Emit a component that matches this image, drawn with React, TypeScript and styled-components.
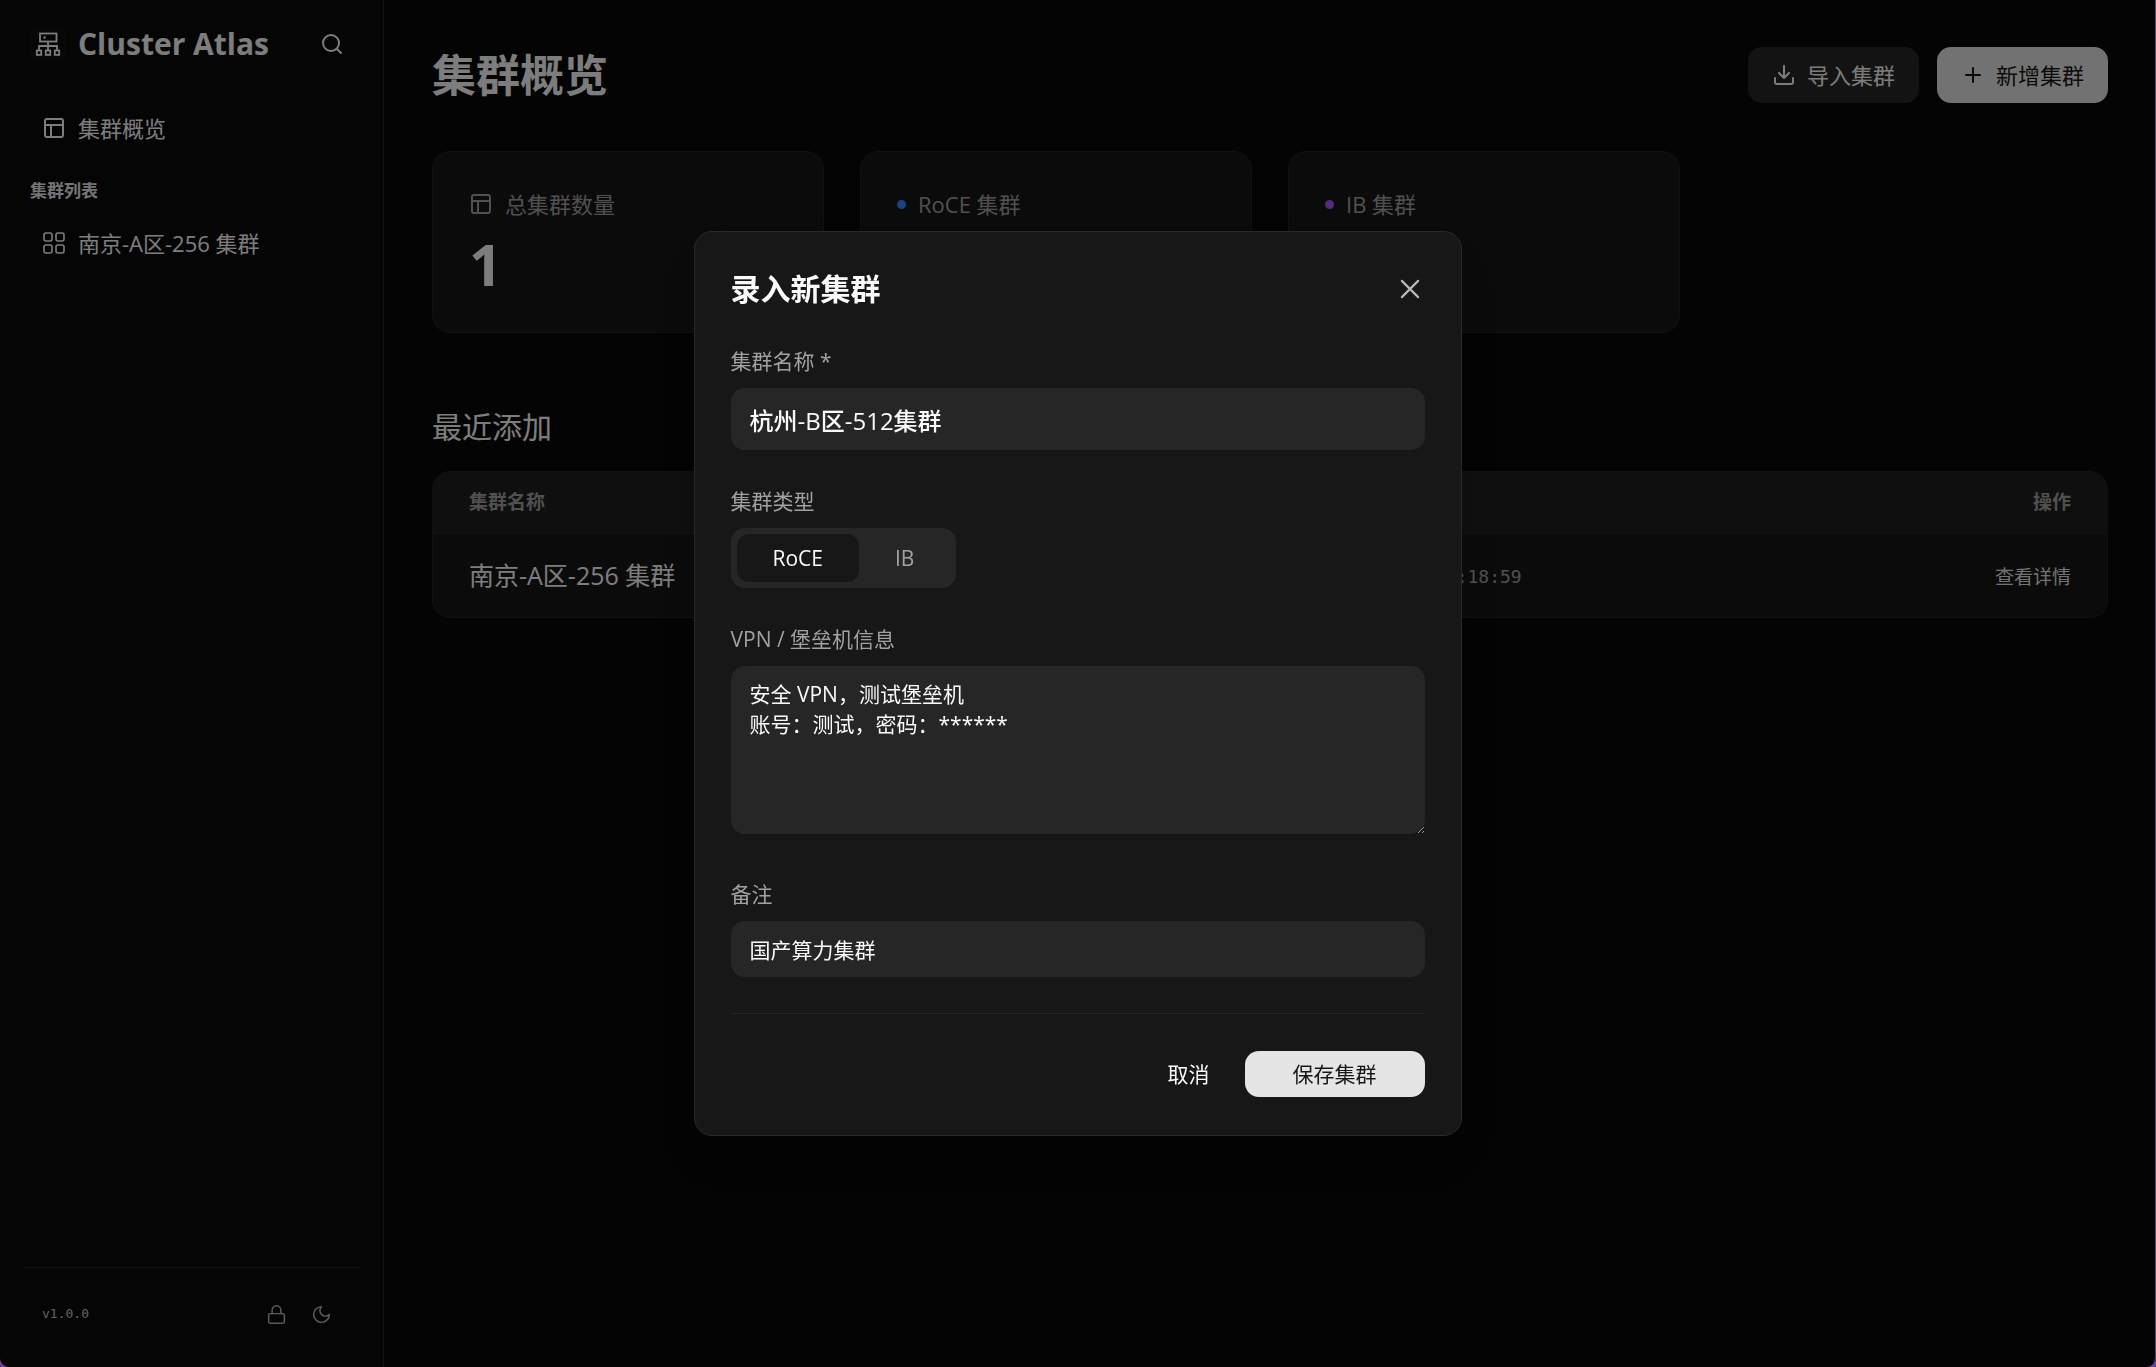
import React, { useState } from "react";
import styled, { createGlobalStyle } from "styled-components";

const sans = `"Open Sans", "Noto Sans CJK SC", sans-serif`;
const mono = `"DejaVu Sans Mono", "Liberation Mono", monospace`;

const GlobalStyle = createGlobalStyle`
  * { box-sizing: border-box; }
  body {
    margin: 0;
    background: #0a0a0a;
    color: #fafafa;
    font-family: ${sans};
    font-size: 21px;
    line-height: 30px;
  }
  h1, h2, p { margin: 0; }
  button, input, textarea { font: inherit; color: inherit; }
  button { border: 0; background: none; padding: 0; cursor: pointer; }
`;

const Shell = styled.div`
  display: flex;
  min-height: 100vh;
`;

const Sidebar = styled.aside`
  display: flex;
  flex-direction: column;
  flex: 0 0 384px;
  padding: 26px 24px 24px;
  border-right: 1px solid #262626;
`;

const Brand = styled.div`
  display: flex;
  align-items: center;
  gap: 12px;
  height: 36px;
  padding: 0 6px;
`;

const Logo = styled.span`
  display: grid;
  place-items: center;
  width: 36px;
  height: 36px;
  border-radius: 8px;
  background: #0f0f0f;
`;

const BrandName = styled.span`
  flex: 1;
  font-size: 30px;
  font-weight: 700;
  white-space: nowrap;
`;

const IconButton = styled.button<{ $size: number; $muted?: boolean }>`
  display: grid;
  place-items: center;
  width: ${(p) => p.$size}px;
  height: ${(p) => p.$size}px;
  color: ${(p) => (p.$muted ? "#b8b8b8" : "#fafafa")};
`;

const Search = styled.div`
  padding-right: 9px;
`;

const Nav = styled.nav`
  display: flex;
  flex-direction: column;
  margin-top: 42px;
`;

const NavLink = styled.a`
  display: flex;
  align-items: center;
  gap: 12px;
  height: 48px;
  padding: 0 18px;
  color: #fafafa;
  font-size: 22px;
  text-decoration: none;
`;

const NavHeading = styled.p`
  margin: 24px 6px 13px;
  font-size: 17px;
  font-weight: 700;
  color: #ebebeb;
`;

const SideFooter = styled.footer`
  display: flex;
  align-items: center;
  gap: 24px;
  margin-top: auto;
  padding: 31px 27px 14px 18px;
  border-top: 1px solid #262626;
  color: #c4c4c4;
`;

const Version = styled.span`
  flex: 1;
  font-family: ${mono};
  font-size: 13px;
`;

const Main = styled.main`
  flex: 1;
  min-width: 0;
  padding: 42px 48px;
  background: #080808;
`;

const PageHeader = styled.header`
  display: flex;
  align-items: center;
  justify-content: space-between;
  margin-bottom: 43px;
`;

const PageTitle = styled.h1`
  font-size: 44px;
  line-height: 66px;
  font-weight: 700;
`;

const Actions = styled.div`
  display: flex;
  gap: 18px;
`;

const ActionButton = styled.button<{ $primary?: boolean }>`
  display: flex;
  align-items: center;
  gap: 11px;
  height: 56px;
  padding: 0 24px;
  border-radius: 14px;
  font-size: 22px;
  background: ${(p) => (p.$primary ? "#e5e5e5" : "#262626")};
  color: ${(p) => (p.$primary ? "#171717" : "#fafafa")};
`;

const Stats = styled.section`
  display: grid;
  grid-template-columns: repeat(3, 1fr);
  gap: 36px;
  max-width: 1248px;
`;

const StatCard = styled.div`
  padding: 36px;
  border: 1px solid #222222;
  border-radius: 18px;
  background: #161616;
`;

const StatLabel = styled.p`
  display: flex;
  align-items: center;
  gap: 12px;
  height: 32px;
  font-size: 22px;
  color: #a1a1a1;
`;

const Dot = styled.span<{ $color: string }>`
  width: 9px;
  height: 9px;
  border-radius: 50%;
  background: ${(p) => p.$color};
`;

const StatValue = styled.p`
  margin-top: 12px;
  font-size: 58px;
  line-height: 64px;
  font-weight: 700;
`;

const SectionTitle = styled.h2`
  margin: 72px 0 22px;
  font-size: 30px;
  line-height: 44px;
  font-weight: 400;
`;

const TableCard = styled.div`
  overflow: hidden;
  border: 1px solid #222222;
  border-radius: 18px;
  background: #161616;
`;

const Table = styled.table`
  width: 100%;
  border-collapse: collapse;
  table-layout: fixed;
`;

const Th = styled.th<{ $end?: boolean; $width?: string }>`
  width: ${(p) => p.$width ?? "auto"};
  height: 61px;
  padding: 0 36px;
  border-bottom: 1px solid #242424;
  background: #1f1f1f;
  color: #a1a1a1;
  font-size: 19px;
  font-weight: 700;
  text-align: ${(p) => (p.$end ? "right" : "left")};
`;

const Td = styled.td<{ $end?: boolean }>`
  height: 84px;
  padding: 0 36px;
  font-size: 25px;
  white-space: nowrap;
  text-align: ${(p) => (p.$end ? "right" : "left")};
`;

const Time = styled.time`
  font-family: ${mono};
  font-size: 18px;
  color: #a1a1a1;
`;

const DetailLink = styled.a`
  color: #e5e5e5;
  font-size: 19px;
  text-decoration: none;
`;

const Overlay = styled.div`
  position: fixed;
  inset: 0;
  display: flex;
  align-items: center;
  justify-content: center;
  background: rgba(0, 0, 0, 0.5);
  border-right: 1px solid #5f4280;
  border-radius: 0 0 9px 9px;
  box-shadow: 0 0 0 3px #6d45a0;
`;

const Dialog = styled.form`
  display: flex;
  flex-direction: column;
  gap: 36px;
  width: 768px;
  max-width: calc(100vw - 48px);
  padding: 36px 36px 38px;
  border: 1px solid #292929;
  border-radius: 18px;
  background: #171717;
  box-shadow: 0 25px 50px -12px rgba(0, 0, 0, 0.25);
`;

const DialogHeader = styled.div`
  display: flex;
  align-items: center;
  justify-content: space-between;
`;

const DialogTitle = styled.h2`
  font-size: 30px;
  line-height: 42px;
  font-weight: 700;
`;

const Field = styled.div`
  display: flex;
  flex-direction: column;
  align-items: stretch;
  gap: 12px;
`;

const Label = styled.label`
  color: #a1a1a1;
`;

const TextInput = styled.input<{ $large?: boolean }>`
  width: 100%;
  height: ${(p) => (p.$large ? 62 : 56)}px;
  padding: 0 19px;
  border: 0;
  border-radius: 14px;
  outline: 0;
  background: #262626;
  font-size: ${(p) => (p.$large ? 24 : 21)}px;
  font-weight: ${(p) => (p.$large ? 500 : 400)};
`;

const TextArea = styled.textarea`
  display: block;
  width: 100%;
  height: 168px;
  margin-bottom: 9px;
  padding: 13px 19px;
  border: 0;
  border-radius: 14px;
  outline: 0;
  background: #262626;
  resize: vertical;
`;

const Segmented = styled.div`
  display: flex;
  align-self: flex-start;
  padding: 6px;
  border-radius: 14px;
  background: #262626;
`;

const Segment = styled.button<{ $active: boolean }>`
  height: 48px;
  padding: 0 36px;
  border-radius: 12px;
  font-weight: 500;
  background: ${(p) => (p.$active ? "#171717" : "transparent")};
  color: ${(p) => (p.$active ? "#fafafa" : "#a1a1a1")};
`;

const DialogFooter = styled.div`
  display: flex;
  align-items: center;
  justify-content: flex-end;
  gap: 35px;
  padding-top: 37px;
  border-top: 1px solid #262626;
`;

const SaveButton = styled.button`
  height: 46px;
  padding: 0 48px;
  border-radius: 14px;
  background: #e5e5e5;
  color: #171717;
`;

type IconProps = { size?: number; stroke?: number; children?: React.ReactNode };

const Icon = ({ size = 24, stroke = 2, children }: IconProps) => (
  <svg
    width={size}
    height={size}
    viewBox="0 0 24 24"
    fill="none"
    stroke="currentColor"
    strokeWidth={stroke}
    strokeLinecap="round"
    strokeLinejoin="round"
    aria-hidden="true"
  >
    {children}
  </svg>
);

const LogoIcon = () => (
  <svg width={26} height={26} viewBox="0 0 26 26" fill="none" stroke="currentColor" strokeWidth="1.8" aria-hidden="true">
    <rect x="5" y="2.5" width="16.5" height="8" />
    <circle cx="9.6" cy="6.5" r="1.2" fill="currentColor" stroke="none" />
    <path d="M13 10.500v9M4 19.500v-4.500h18v4.500" />
    <rect x="1.800" y="19.500" width="4.400" height="4.400" />
    <rect x="10.800" y="19.500" width="4.400" height="4.400" />
    <rect x="19.800" y="19.500" width="4.400" height="4.400" />
  </svg>
);

const LayoutIcon = () => (
  <Icon>
    <rect x="3" y="3" width="18" height="18" rx="2" />
    <path d="M3 9h18M9 21V9" />
  </Icon>
);

const GridIcon = () => (
  <Icon stroke={1.6}>
    <rect x="2" y="2" width="8" height="8" rx="2" />
    <rect x="14" y="2" width="8" height="8" rx="2" />
    <rect x="2" y="14" width="8" height="8" rx="2" />
    <rect x="14" y="14" width="8" height="8" rx="2" />
  </Icon>
);

export default function App() {
  const [name, setName] = useState("杭州-B区-512集群");
  const [kind, setKind] = useState("RoCE");
  const [access, setAccess] = useState("安全 VPN，测试堡垒机\n账号：测试，密码：******");
  const [note, setNote] = useState("国产算力集群");

  return (
    <>
      <GlobalStyle />
      <Shell>
        <Sidebar>
          <Brand>
            <Logo>
              <LogoIcon />
            </Logo>
            <BrandName>Cluster Atlas</BrandName>
            <Search>
              <IconButton $size={24} aria-label="搜索">
                <Icon>
                  <circle cx="11" cy="11" r="8" />
                  <path d="m21 21-4.300-4.300" />
                </Icon>
              </IconButton>
            </Search>
          </Brand>
          <Nav>
            <NavLink href="#overview">
              <LayoutIcon />
              集群概览
            </NavLink>
            <NavHeading>集群列表</NavHeading>
            <NavLink href="#nanjing">
              <GridIcon />
              南京-A区-256 集群
            </NavLink>
          </Nav>
          <SideFooter>
            <Version>v1.0.0</Version>
            <IconButton $size={21} $muted aria-label="锁定">
              <Icon size={21} stroke={1.7}>
                <rect x="3" y="11" width="18" height="11" rx="2" />
                <path d="M7 11V7a5 5 0 0 1 10 0v4" />
              </Icon>
            </IconButton>
            <IconButton $size={21} $muted aria-label="深色模式">
              <Icon size={21} stroke={1.7}>
                <path d="M12 3a6 6 0 0 0 9 9 9 9 0 1 1-9-9Z" />
              </Icon>
            </IconButton>
          </SideFooter>
        </Sidebar>

        <Main>
          <PageHeader>
            <PageTitle>集群概览</PageTitle>
            <Actions>
              <ActionButton>
                <Icon>
                  <path d="M12 3v12M7 10l5 5 5-5M3 15v4a2 2 0 0 0 2 2h14a2 2 0 0 0 2-2v-4" />
                </Icon>
                导入集群
              </ActionButton>
              <ActionButton $primary>
                <Icon>
                  <path d="M12 5v14M5 12h14" />
                </Icon>
                新增集群
              </ActionButton>
            </Actions>
          </PageHeader>

          <Stats>
            <StatCard>
              <StatLabel>
                <LayoutIcon />
                总集群数量
              </StatLabel>
              <StatValue>1</StatValue>
            </StatCard>
            <StatCard>
              <StatLabel>
                <Dot $color="#3b82f6" />
                RoCE 集群
              </StatLabel>
            </StatCard>
            <StatCard>
              <StatLabel>
                <Dot $color="#a855f7" />
                IB 集群
              </StatLabel>
            </StatCard>
          </Stats>

          <SectionTitle>最近添加</SectionTitle>
          <TableCard>
            <Table>
              <thead>
                <tr>
                  <Th $width="512px">集群名称</Th>
                  <Th $width="20%">类型</Th>
                  <Th $width="30%">添加时间</Th>
                  <Th $end>操作</Th>
                </tr>
              </thead>
              <tbody>
                <tr>
                  <Td>南京-A区-256 集群</Td>
                  <Td>RoCE</Td>
                  <Td>
                    <Time>2025/12/15 10:18:59</Time>
                  </Td>
                  <Td $end>
                    <DetailLink href="#nanjing">查看详情</DetailLink>
                  </Td>
                </tr>
              </tbody>
            </Table>
          </TableCard>
        </Main>
      </Shell>

      <Overlay>
        <Dialog role="dialog" aria-modal="true" aria-labelledby="dialog-title" onSubmit={(e) => e.preventDefault()}>
          <DialogHeader>
            <DialogTitle id="dialog-title">录入新集群</DialogTitle>
            <IconButton type="button" $size={30} $muted aria-label="关闭">
              <Icon size={30} stroke={1.7}>
                <path d="M18.500 5.500l-13 13M5.500 5.500l13 13" />
              </Icon>
            </IconButton>
          </DialogHeader>
          <Field>
            <Label htmlFor="name">集群名称 *</Label>
            <TextInput id="name" $large value={name} onChange={(e) => setName(e.target.value)} />
          </Field>
          <Field>
            <Label as="span" id="kind">集群类型</Label>
            <Segmented role="group" aria-labelledby="kind">
              {["RoCE", "IB"].map((k) => (
                <Segment key={k} type="button" $active={k === kind} aria-pressed={k === kind} onClick={() => setKind(k)}>
                  {k}
                </Segment>
              ))}
            </Segmented>
          </Field>
          <Field>
            <Label htmlFor="access">VPN / 堡垒机信息</Label>
            <TextArea id="access" value={access} onChange={(e) => setAccess(e.target.value)} />
          </Field>
          <Field>
            <Label htmlFor="note">备注</Label>
            <TextInput id="note" value={note} onChange={(e) => setNote(e.target.value)} />
          </Field>
          <DialogFooter>
            <button type="button">取消</button>
            <SaveButton type="submit">保存集群</SaveButton>
          </DialogFooter>
        </Dialog>
      </Overlay>
    </>
  );
}
